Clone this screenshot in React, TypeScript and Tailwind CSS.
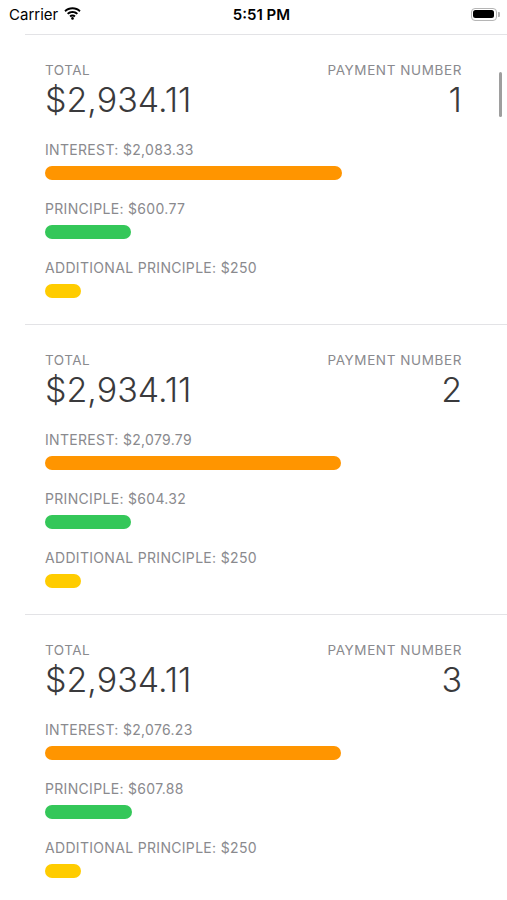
import React from 'react';

type Payment = {
  number: number;
  total: number;
  interest: number;
  principle: number;
  additional: number;
};

const payments: Payment[] = [
  { number: 1, total: 2934.11, interest: 2083.33, principle: 600.77, additional: 250 },
  { number: 2, total: 2934.11, interest: 2079.79, principle: 604.32, additional: 250 },
  { number: 3, total: 2934.11, interest: 2076.23, principle: 607.88, additional: 250 },
];

const BAR_MAX = 418;

const money = (n: number) =>
  '$' +
  n.toLocaleString('en-US', {
    minimumFractionDigits: Number.isInteger(n) ? 0 : 2,
    maximumFractionDigits: 2,
  });

const StatusBar: React.FC = () => (
  <div className="h-[28px] flex items-center justify-between pl-[9px] pr-[7px] text-black">
    <div className="flex items-center gap-[6px] w-[120px]">
      <span className="text-[15px] leading-none">Carrier</span>
      <svg width="17" height="13" viewBox="0 0 17 13" className="mt-[-1px]">
        <path d="M8.5 2.2c2.6 0 5 1 6.8 2.7l1.3-1.4C14.4 1.4 11.6.3 8.5.3S2.6 1.4.4 3.5l1.3 1.4C3.5 3.2 5.9 2.2 8.5 2.2z" fill="#000" />
        <path d="M8.5 5.9c1.6 0 3.1.6 4.2 1.7L14 6.2c-1.5-1.4-3.4-2.2-5.5-2.2S4.5 4.8 3 6.2l1.3 1.4C5.4 6.5 6.9 5.9 8.5 5.9z" fill="#000" />
        <path d="M8.5 9.5c.7 0 1.3.3 1.8.7l1.3-1.4c-.8-.8-1.9-1.2-3.1-1.2s-2.3.4-3.1 1.2l1.3 1.4c.5-.4 1.1-.7 1.8-.7z" fill="#000" />
        <circle cx="8.5" cy="11.4" r="1.3" fill="#000" />
      </svg>
    </div>
    <span className="text-[15px] font-semibold leading-none ml-[14px]">5:51 PM</span>
    <div className="w-[120px] flex justify-end">
      <div className="flex items-center">
        <div className="w-[26px] h-[13px] rounded-[4px] border border-[#b5b5b5] p-[1.5px]">
          <div className="w-full h-full rounded-[2.5px] bg-black" />
        </div>
        <div className="w-[2px] h-[5px] rounded-r-[1px] bg-[#b5b5b5] ml-[1px]" />
      </div>
    </div>
  </div>
);

const Bar: React.FC<{ label: string; value: number; total: number; color: string }> = ({
  label,
  value,
  total,
  color,
}) => (
  <div>
    <div className="text-[14px] leading-[18px] text-[#8a8a8e] tracking-[0.32px]">{label}</div>
    <div
      className={`h-[14px] rounded-full mt-[7px] ${color}`}
      style={{ width: Math.round((value / total) * BAR_MAX) }}
    />
  </div>
);

const PaymentRow: React.FC<{ p: Payment }> = ({ p }) => (
  <div className="ml-[25px] border-t border-[#e3e3e6] pl-[20px] pr-[45px] pt-[27px] pb-[26px]">
    <div className="flex justify-between">
      <div>
        <div className="text-[13.5px] leading-[16px] text-[#8a8a8e] tracking-[0.5px]">TOTAL</div>
        <div className="text-[34px] leading-[40px] font-light text-[#3a3a3c] mt-[2px]">
          {money(p.total)}
        </div>
      </div>
      <div className="text-right">
        <div className="text-[13.5px] leading-[16px] text-[#8a8a8e] tracking-[0.6px]">PAYMENT NUMBER</div>
        <div className="text-[34px] leading-[40px] font-light text-[#3a3a3c] mt-[2px]">{p.number}</div>
      </div>
    </div>
    <div className="mt-[21px] flex flex-col gap-[20px]">
      <Bar label={`INTEREST: ${money(p.interest)}`} value={p.interest} total={p.total} color="bg-[#ff9500]" />
      <Bar label={`PRINCIPLE: ${money(p.principle)}`} value={p.principle} total={p.total} color="bg-[#34c759]" />
      <Bar
        label={`ADDITIONAL PRINCIPLE: ${money(p.additional)}`}
        value={p.additional}
        total={p.total}
        color="bg-[#ffcc00]"
      />
    </div>
  </div>
);

export default function App() {
  return (
    <div className="w-[507px] h-[900px] bg-white overflow-hidden relative font-['Inter',sans-serif]">
      <StatusBar />
      <div className="mt-[6px]">
        {payments.map((p) => (
          <PaymentRow key={p.number} p={p} />
        ))}
      </div>
      <div className="absolute left-[499px] top-[72px] w-[3px] h-[45px] rounded-full bg-[#9e9e9e]" />
    </div>
  );
}
